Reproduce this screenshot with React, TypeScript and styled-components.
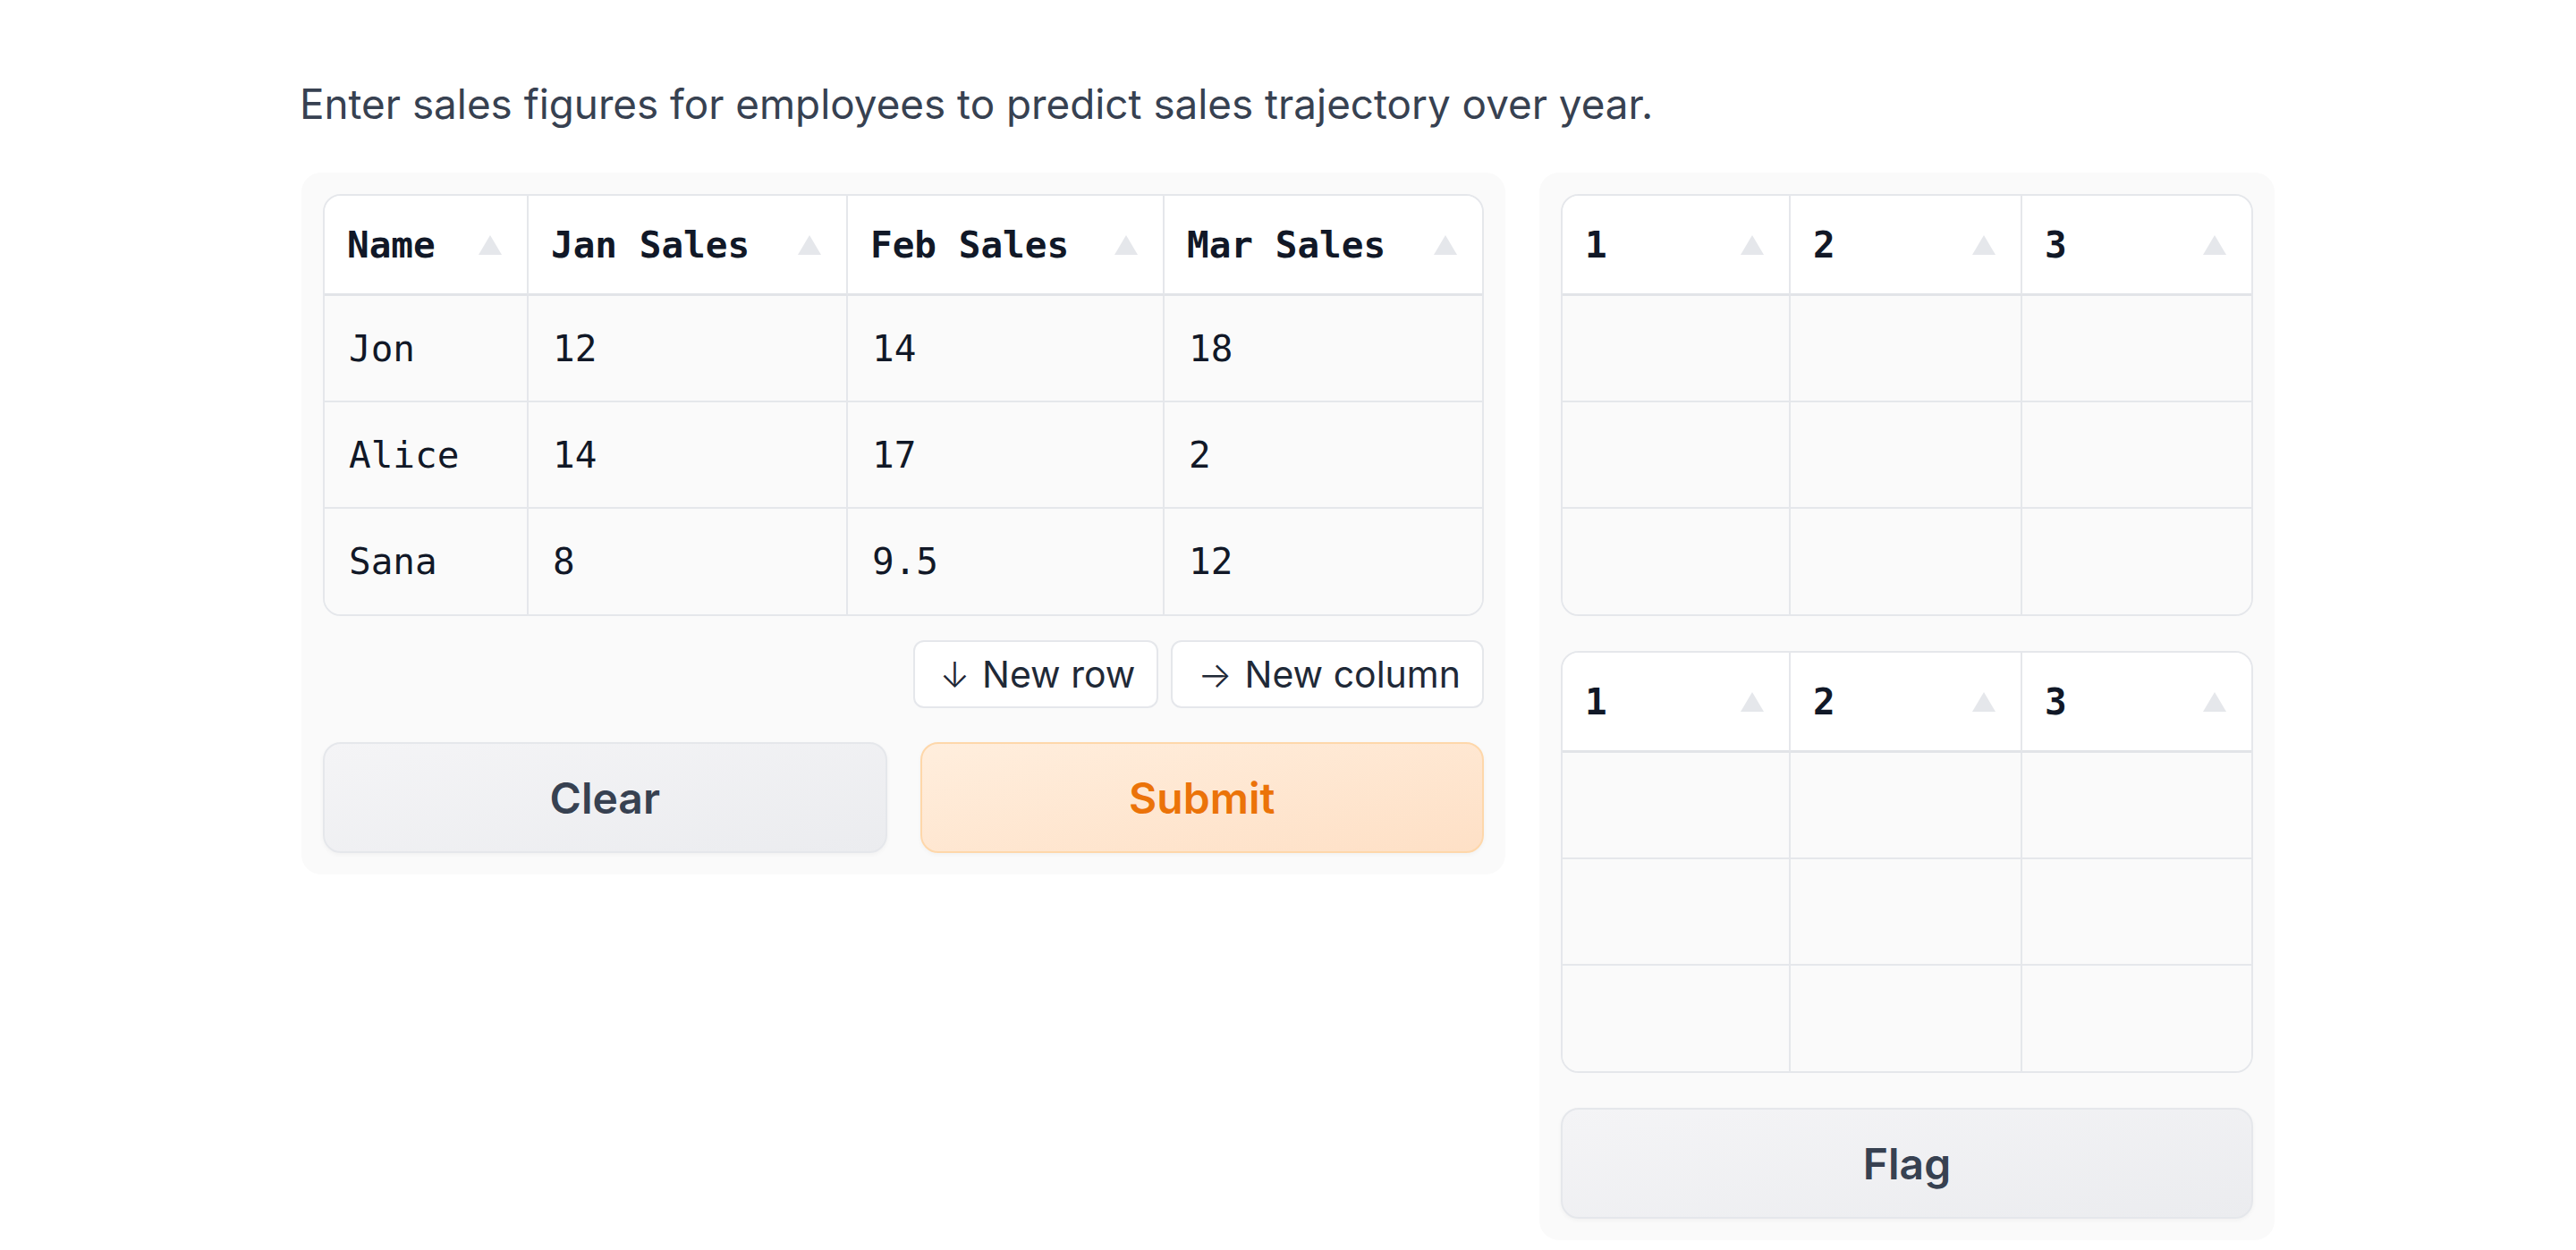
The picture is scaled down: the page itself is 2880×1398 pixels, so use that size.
import React from "react";
import styled, { createGlobalStyle, css } from "styled-components";

const GlobalStyle = createGlobalStyle`
  html, body {
    margin: 0;
    padding: 0;
    background: #ffffff;
    font-family: Inter, "Noto Sans", "Liberation Sans", sans-serif;
  }
  * { box-sizing: border-box; }
`;

const Page = styled.div`
  width: 2206px;
  margin: 0 auto;
  padding-top: 83px;
`;

const Description = styled.p`
  margin: 0 0 43px -2px;
  font-size: 45.8px;
  line-height: 67px;
  color: #374151;
  font-weight: 400;
`;

const Columns = styled.div`
  display: flex;
  align-items: flex-start;
  gap: 38px;
`;

const Panel = styled.div<{ $width: number }>`
  width: ${(p) => p.$width}px;
  flex: none;
  background: #fafafa;
  border-radius: 22px;
  padding: 24px;
  display: flex;
  flex-direction: column;
`;

const Stack = styled.div<{ $gap: number }>`
  display: flex;
  flex-direction: column;
  gap: ${(p) => p.$gap}px;
`;

const Table = styled.div<{ $cols: string }>`
  display: grid;
  grid-template-columns: ${(p) => p.$cols};
  border: 2px solid #e5e7eb;
  border-radius: 20px;
  overflow: hidden;
  background: #fafafa;
`;

const cellBase = css<{ $last: boolean }>`
  display: flex;
  align-items: center;
  font-family: "DejaVu Sans Mono", "Liberation Mono", monospace;
  font-size: 41px;
  color: #111827;
  border-right: ${(p) => (p.$last ? "none" : "2px solid #e5e7eb")};
`;

const HeaderCell = styled.div<{ $last: boolean }>`
  ${cellBase};
  height: 112px;
  background: #ffffff;
  font-weight: 700;
  justify-content: space-between;
  padding: 0 28px 0 25px;
  border-bottom: 3px solid #e2e4e8;
  white-space: pre;
`;

const BodyCell = styled.div<{ $last: boolean; $lastRow: boolean }>`
  ${cellBase};
  height: ${(p) => (p.$lastRow ? 118 : 119)}px;
  background: #fafafa;
  padding: 0 27px;
  border-bottom: ${(p) => (p.$lastRow ? "none" : "2px solid #e5e7eb")};
  white-space: pre;
`;

const SortIcon = () => (
  <svg width="26" height="22" viewBox="0 0 26 22" aria-hidden="true">
    <polygon points="13,0 26,22 0,22" fill="#e5e7eb" />
  </svg>
);

const ControlsRow = styled.div`
  display: flex;
  justify-content: flex-end;
  gap: 14px;
`;

const SmallButton = styled.button`
  height: 76px;
  padding: 0 24px 0 28px;
  border: 2px solid #e5e7eb;
  border-radius: 12px;
  background: #ffffff;
  color: #1f2937;
  font-family: Inter, "Noto Sans", "Liberation Sans", sans-serif;
  font-size: 41px;
  font-weight: 400;
  display: flex;
  align-items: center;
  gap: 14px;
  cursor: pointer;
`;

const Arrow = styled.span`
  font-size: 40px;
  font-weight: 300;
`;

const ActionRow = styled.div`
  display: grid;
  grid-template-columns: 1fr 1fr;
  gap: 37px;
`;

const BigButton = styled.button<{ $variant: "primary" | "secondary" }>`
  height: 124px;
  width: 100%;
  border-radius: 20px;
  font-family: Inter, "Noto Sans", "Liberation Sans", sans-serif;
  font-size: 48px;
  font-weight: 600;
  cursor: pointer;
  box-shadow: 0 2px 5px rgba(0, 0, 0, 0.04);
  ${(p) =>
    p.$variant === "primary"
      ? css`
          background: linear-gradient(to bottom right, #ffeedd, #fee0c6);
          border: 2px solid #fed7aa;
          color: #eb7309;
        `
      : css`
          background: linear-gradient(to bottom right, #f4f4f6, #ebecef);
          border: 2px solid #e5e7eb;
          color: #374151;
        `}
`;

type Grid = { headers: string[]; rows: string[][]; cols: string };

const DataGrid = ({ headers, rows, cols }: Grid) => (
  <Table $cols={cols}>
    {headers.map((h, i) => (
      <HeaderCell key={"h" + i} $last={i === headers.length - 1}>
        <span>{h}</span>
        <SortIcon />
      </HeaderCell>
    ))}
    {rows.map((r, ri) =>
      r.map((c, ci) => (
        <BodyCell
          key={ri + "-" + ci}
          $last={ci === r.length - 1}
          $lastRow={ri === rows.length - 1}
        >
          {c}
        </BodyCell>
      ))
    )}
  </Table>
);

const salesRows = [
  ["Jon", "12", "14", "18"],
  ["Alice", "14", "17", "2"],
  ["Sana", "8", "9.5", "12"],
];

const emptyRows = [
  ["", "", ""],
  ["", "", ""],
  ["", "", ""],
];

export default function App() {
  return (
    <>
      <GlobalStyle />
      <Page>
        <Description>
          Enter sales figures for employees to predict sales trajectory over year.
        </Description>
        <Columns>
          <Panel $width={1346}>
            <Stack $gap={27}>
              <DataGrid
                headers={["Name", "Jan Sales", "Feb Sales", "Mar Sales"]}
                rows={salesRows}
                cols="228px 357px 354px 1fr"
              />
              <Stack $gap={38}>
                <ControlsRow>
                  <SmallButton>
                    <Arrow>↓</Arrow>New row
                  </SmallButton>
                  <SmallButton>
                    <Arrow>→</Arrow>New column
                  </SmallButton>
                </ControlsRow>
                <ActionRow>
                  <BigButton $variant="secondary">Clear</BigButton>
                  <BigButton $variant="primary">Submit</BigButton>
                </ActionRow>
              </Stack>
            </Stack>
          </Panel>
          <Panel $width={822}>
            <Stack $gap={39}>
              <DataGrid headers={["1", "2", "3"]} rows={emptyRows} cols="255px 259px 1fr" />
              <DataGrid headers={["1", "2", "3"]} rows={emptyRows} cols="255px 259px 1fr" />
              <BigButton $variant="secondary">Flag</BigButton>
            </Stack>
          </Panel>
        </Columns>
      </Page>
    </>
  );
}
